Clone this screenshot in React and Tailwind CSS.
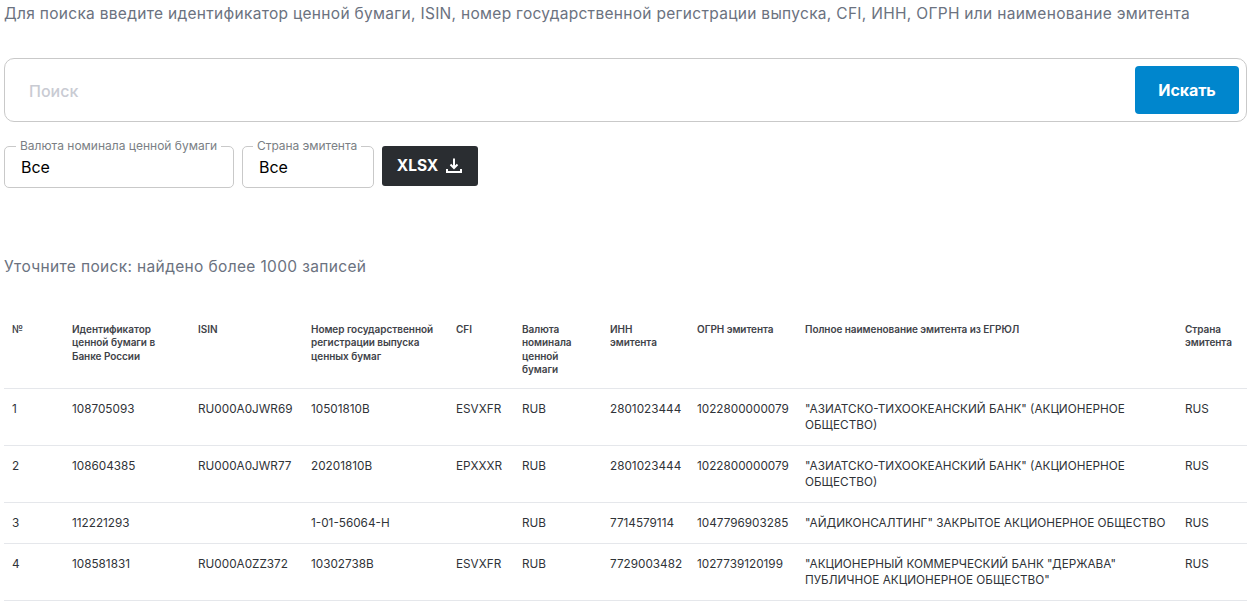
const cols = ["w-[60px]","w-[126px]","w-[113px]","w-[145px]","w-[66px]","w-[88px]","w-[87px]","w-[108px]","w-[380px]","w-[70px]"];
const heads = ["№","Идентификатор ценной бумаги в Банке России","ISIN","Номер государственной регистрации выпуска ценных бумаг","CFI","Валюта номинала ценной бумаги","ИНН эмитента","ОГРН эмитента","Полное наименование эмитента из ЕГРЮЛ","Страна эмитента"];
const rows = [
["1","108705093","RU000A0JWR69","10501810B","ESVXFR","RUB","2801023444","1022800000079","\"АЗИАТСКО-ТИХООКЕАНСКИЙ БАНК\" (АКЦИОНЕРНОЕ ОБЩЕСТВО)","RUS"],
["2","108604385","RU000A0JWR77","20201810B","EPXXXR","RUB","2801023444","1022800000079","\"АЗИАТСКО-ТИХООКЕАНСКИЙ БАНК\" (АКЦИОНЕРНОЕ ОБЩЕСТВО)","RUS"],
["3","112221293","","1-01-56064-Н","","RUB","7714579114","1047796903285","\"АЙДИКОНСАЛТИНГ\" ЗАКРЫТОЕ АКЦИОНЕРНОЕ ОБЩЕСТВО","RUS"],
["4","108581831","RU000A0ZZ372","10302738B","ESVXFR","RUB","7729003482","1027739120199","\"АКЦИОНЕРНЫЙ КОММЕРЧЕСКИЙ БАНК \"ДЕРЖАВА\" ПУБЛИЧНОЕ АКЦИОНЕРНОЕ ОБЩЕСТВО\"","RUS"],
];
function Field({label, className, labelClass}) {
  return (
    <div className={"relative h-[42px] rounded-[5px] border border-[#c9c9c9] pl-[16px] pt-[10px] text-[16px] leading-[20px] text-black " + className}>
      <span className={"absolute top-[-8px] bg-white px-[4px] text-[12px] leading-[14px] text-[#7b7f85] whitespace-nowrap " + labelClass}>{label}</span>
      Все
    </div>
  );
}
export default function App() {
  return (
    <div className="h-[605px] overflow-hidden bg-white pl-[4px] font-['Inter',sans-serif]">
      <p className="pt-[5px] text-[15.5px] leading-[18px] tracking-[0.3px] text-[#6b7280] whitespace-nowrap">Для поиска введите идентификатор ценной бумаги, ISIN, номер государственной регистрации выпуска, CFI, ИНН, ОГРН или наименование эмитента</p>
      <div className="mt-[35px] flex h-[64px] w-[1243px] items-center justify-between rounded-[10px] border border-[#c9c9c9] pl-[24px] pr-[7px]">
        <span className="pt-[2px] text-[16px] font-medium text-[#c9cbd3]">Поиск</span>
        <button className="h-[48px] w-[104px] rounded-[4px] bg-[#0086cd] text-[16px] font-bold tracking-[-0.1px] text-white">Искать</button>
      </div>
      <div className="mt-[24px] flex gap-[8px]">
        <Field label="Валюта номинала ценной бумаги" className="w-[230px]" labelClass="left-[11px]" />
        <Field label="Страна эмитента" className="w-[132px]" labelClass="left-[10px] tracking-[-0.05px]" />
        <button className="flex h-[40px] w-[96px] items-center justify-center gap-[7px] rounded-[3px] bg-[#2a2d31] text-[15.5px] font-bold text-white">
          XLSX
          <svg width="18" height="18" viewBox="0 0 18 18" fill="none" stroke="white" strokeWidth="2"><path d="M9 1.5v9M5.5 7.5 9 11l3.5-3.5M2 12v3h14v-3" /></svg>
        </button>
      </div>
      <p className="mt-[70px] text-[15.5px] leading-[18px] tracking-[0.35px] text-[#6b7280]">Уточните поиск: найдено более 1000 записей</p>
      <table className="mt-[46px] w-[1243px] table-fixed border-collapse">
        <colgroup>{cols.map((c,i)=><col key={i} className={c} />)}</colgroup>
        <thead>
          <tr className="h-[66px] border-b border-[#e5e7eb]">
            {heads.map((h,i)=><th key={i} className="px-[8px] pt-[1px] pb-[11px] align-top text-left text-[10px] leading-[13.4px] font-semibold tracking-[-0.05px] text-[#3f4349]">{h}</th>)}
          </tr>
        </thead>
        <tbody>
          {rows.map((r,i)=>(
            <tr key={i} className="border-b border-[#e5e7eb]">
              {r.map((c,j)=><td key={j} className="px-[8px] pt-[12px] pb-[12px] align-top text-[11.75px] leading-[16px] text-[#2f3338]">{c}</td>)}
            </tr>
          ))}
        </tbody>
      </table>
    </div>
  );
}
